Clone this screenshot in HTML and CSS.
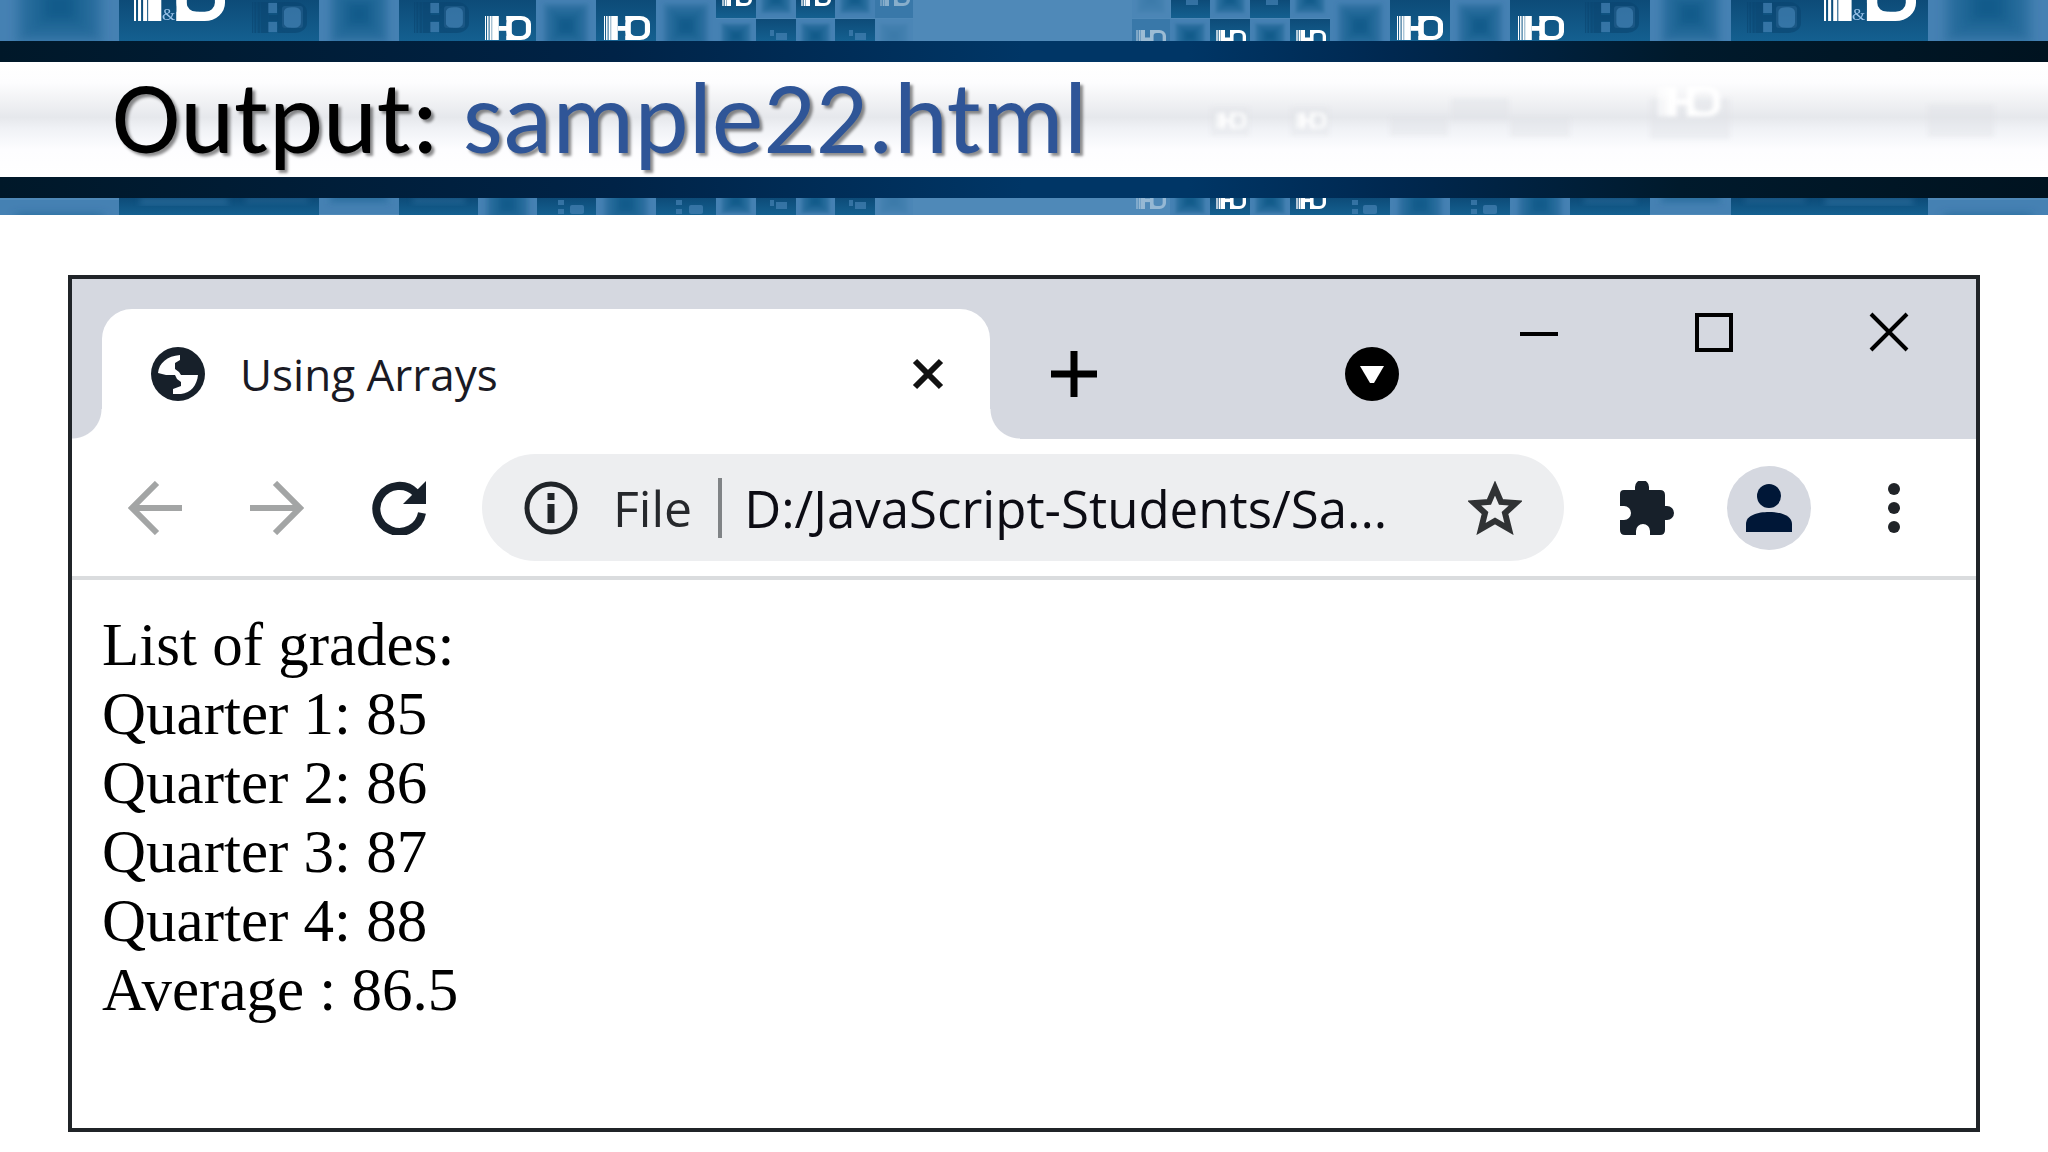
FILE: index.html
```html
<!DOCTYPE html>
<html lang="en">
<head>
    <meta charset="UTF-8">
    <meta name="viewport" content="width=device-width, initial-scale=1.0">
    <title>Output: sample22.html</title>
    <link rel="stylesheet" href="styles.css">
</head>
<body>
<!-- Shared shapes for the banner -->
<svg class="defs" aria-hidden="true">
    <defs>
        <filter id="soft"><feGaussianBlur stdDeviation="3"/></filter>
        <symbol id="tile" viewBox="0 0 80 80" preserveAspectRatio="none">
            <rect width="80" height="80" fill="#4581b3"/>
            <g fill="#00507d" fill-opacity="0.2" filter="url(#soft)">
                <rect x="10" y="10" width="60" height="60"/>
                <rect x="14" y="14" width="52" height="52"/>
                <rect x="18" y="18" width="44" height="44"/>
                <rect x="24" y="24" width="32" height="32"/>
                <rect x="29" y="29" width="22" height="22"/>
                <rect x="32" y="32" width="16" height="16"/>
            </g>
        </symbol>
        <symbol id="logo" viewBox="0 0 90 60" preserveAspectRatio="none">
            <g fill="currentColor">
                <rect width="2" height="60"/>
                <rect x="4" width="3" height="60"/>
                <rect x="9" width="4" height="60"/>
                <rect x="14" width="13" height="60"/>
                <rect x="27" y="25" width="16" height="12"/>
                <rect x="42" width="10" height="60"/>
                <rect x="42" width="22" height="10"/>
                <rect x="42" y="50" width="22" height="10"/>
            </g>
            <rect x="47" y="5" width="38" height="50" rx="15" fill="none" stroke="currentColor" stroke-width="10"/>
        </symbol>
        <linearGradient id="dark" x1="0" y1="0" x2="0" y2="1">
            <stop offset="0" stop-color="#0d4b78"/>
            <stop offset="1" stop-color="#146090"/>
        </linearGradient>
    </defs>
</svg>

<header class="banner">
    <svg class="strip strip-top" viewBox="0 0 2048 41" preserveAspectRatio="none" aria-hidden="true">
        <rect width="2048" height="41" fill="#4f89b8"/>
        <g fill="url(#dark)">
            <rect x="119" width="200" height="41"/>
            <rect x="399" width="137" height="41"/>
            <rect x="596" width="60" height="41"/>
            <rect x="716" width="40" height="18"/>
            <rect x="796" width="39" height="18"/>
            <rect x="756" y="19" width="40" height="22"/>
            <rect x="835" y="19" width="40" height="22"/>
            <rect x="1171" width="39" height="18"/>
            <rect x="1250" width="40" height="18"/>
            <rect x="1210" y="19" width="40" height="22"/>
            <rect x="1290" y="19" width="40" height="22"/>
            <rect x="1390" width="60" height="41"/>
            <rect x="1510" width="140" height="41"/>
            <rect x="1731" width="197" height="41"/>
        </g>
        <g fill="#23689a" opacity="0.5">
            <rect x="875" width="38" height="18"/>
            <rect x="1132" y="19" width="38" height="22"/>
        </g>
        <use href="#tile" x="0" y="-44" width="119" height="100"/>
        <use href="#tile" x="319" y="-26" width="80" height="80"/>
        <use href="#tile" x="536" y="-4" width="60" height="60"/>
        <use href="#tile" x="656" y="-4" width="60" height="60"/>
        <use href="#tile" x="756" y="-20" width="40" height="38"/>
        <use href="#tile" x="835" y="-20" width="40" height="38"/>
        <use href="#tile" x="716" y="19" width="40" height="34"/>
        <use href="#tile" x="796" y="19" width="39" height="34"/>
        <use href="#tile" x="875" y="19" width="38" height="34" opacity="0.3"/>
        <use href="#tile" x="1132" y="-20" width="38" height="38" opacity="0.3"/>
        <use href="#tile" x="1210" y="-20" width="40" height="38"/>
        <use href="#tile" x="1290" y="-20" width="40" height="38"/>
        <use href="#tile" x="1170" y="19" width="40" height="34"/>
        <use href="#tile" x="1250" y="19" width="40" height="34"/>
        <use href="#tile" x="1330" y="-4" width="60" height="60"/>
        <use href="#tile" x="1450" y="-4" width="60" height="60"/>
        <use href="#tile" x="1650" y="-26" width="81" height="80"/>
        <use href="#tile" x="1928" y="-44" width="120" height="100"/>
        <g class="logo-white">
            <use href="#logo" x="134" y="-34" width="91" height="55"/>
            <use href="#logo" x="485" y="16" width="46" height="24"/>
            <use href="#logo" x="604" y="16" width="46" height="24"/>
            <use href="#logo" x="722" y="-12" width="30" height="18"/>
            <use href="#logo" x="801" y="-12" width="30" height="18"/>
            <use href="#logo" x="880" y="-12" width="30" height="18" opacity="0.4"/>
            <use href="#logo" x="1136" y="30" width="30" height="18" opacity="0.5"/>
            <use href="#logo" x="1216" y="30" width="30" height="18"/>
            <use href="#logo" x="1296" y="30" width="30" height="18"/>
            <use href="#logo" x="1397" y="16" width="46" height="24"/>
            <use href="#logo" x="1518" y="16" width="46" height="24"/>
            <use href="#logo" x="1824" y="-34" width="92" height="55"/>
        </g>
        <g fill="#4581b3" opacity="0.7">
            <rect x="282" y="6" width="21" height="22" rx="3"/>
            <rect x="444" y="6" width="21" height="22" rx="3"/>
            <rect x="1614" y="6" width="21" height="22" rx="3"/>
            <rect x="1776" y="6" width="21" height="22" rx="3"/>
            <rect x="268" y="3" width="9" height="10"/>
            <rect x="268" y="22" width="9" height="10"/>
            <rect x="430" y="3" width="9" height="10"/>
            <rect x="430" y="22" width="9" height="10"/>
            <rect x="1601" y="3" width="9" height="10"/>
            <rect x="1601" y="22" width="9" height="10"/>
            <rect x="1763" y="3" width="9" height="10"/>
            <rect x="1763" y="22" width="9" height="10"/>
            <rect x="770" y="30" width="4" height="6"/>
            <rect x="776" y="33" width="11" height="7"/>
            <rect x="849" y="30" width="4" height="6"/>
            <rect x="855" y="33" width="11" height="7"/>
            <rect x="1186" y="0" width="12" height="5"/>
            <rect x="1266" y="0" width="12" height="5"/>
        </g>
        <g class="logo-dark">
            <use href="#logo" x="252" y="2" width="55" height="31"/>
            <use href="#logo" x="414" y="2" width="55" height="31"/>
            <use href="#logo" x="1585" y="2" width="54" height="31"/>
            <use href="#logo" x="1747" y="2" width="54" height="31"/>
        </g>
        <g class="amp">
            <text x="162" y="20">&amp;</text>
            <text x="1852" y="20">&amp;</text>
        </g>
    </svg>
    <div class="rule"></div>
    <div class="title-bar">
        <svg class="ghost" viewBox="0 0 2048 114" preserveAspectRatio="none" aria-hidden="true">
            <g fill="#dfe2e7" opacity="0.4">
                <rect x="1211" y="45" width="38" height="28"/>
                <rect x="1291" y="45" width="38" height="28"/>
                <rect x="1390" y="54" width="58" height="19"/>
                <rect x="1451" y="36" width="58" height="22"/>
                <rect x="1510" y="55" width="60" height="19"/>
                <rect x="1650" y="36" width="80" height="40"/>
                <rect x="1928" y="42" width="66" height="32"/>
            </g>
            <g class="logo-white">
                <use href="#logo" x="1216" y="50" width="30" height="16"/>
                <use href="#logo" x="1296" y="50" width="30" height="16"/>
                <use href="#logo" x="1658" y="24" width="62" height="30"/>
            </g>
        </svg>
        <h1>Output: <span>sample22.html</span></h1>
    </div>
    <div class="rule"></div>
    <svg class="strip strip-bottom" viewBox="0 0 2048 17" preserveAspectRatio="none" aria-hidden="true">
        <rect width="2048" height="17" fill="#4f89b8"/>
        <g fill="url(#dark)">
            <rect x="119" width="200" height="17"/>
            <rect x="399" width="79" height="17"/>
            <rect x="537" width="59" height="17"/>
            <rect x="656" width="60" height="17"/>
            <rect x="756" width="40" height="17"/>
            <rect x="835" width="40" height="17"/>
            <rect x="1210" width="40" height="17"/>
            <rect x="1290" width="100" height="17"/>
            <rect x="1450" width="60" height="17"/>
            <rect x="1570" width="80" height="17"/>
            <rect x="1731" width="197" height="17"/>
        </g>
        <g fill="#3a7bab" opacity="0.5" filter="url(#soft)">
            <rect x="140" width="88" height="7"/>
            <rect x="246" width="62" height="4"/>
            <rect x="413" width="52" height="5"/>
            <rect x="1584" width="52" height="5"/>
            <rect x="1745" width="60" height="4"/>
            <rect x="1825" width="88" height="7"/>
        </g>
        <use href="#tile" x="0" y="2" width="119" height="90"/>
        <use href="#tile" x="319" y="-64" width="80" height="80"/>
        <use href="#tile" x="478" y="-24" width="59" height="60"/>
        <use href="#tile" x="596" y="-24" width="60" height="60"/>
        <use href="#tile" x="716" y="-14" width="40" height="34"/>
        <use href="#tile" x="796" y="-14" width="39" height="34"/>
        <use href="#tile" x="875" y="-14" width="38" height="34" opacity="0.3"/>
        <use href="#tile" x="1170" y="-14" width="40" height="34"/>
        <use href="#tile" x="1250" y="-14" width="40" height="34"/>
        <use href="#tile" x="1390" y="-24" width="60" height="60"/>
        <use href="#tile" x="1510" y="-24" width="60" height="60"/>
        <use href="#tile" x="1650" y="-64" width="81" height="80"/>
        <use href="#tile" x="1928" y="2" width="120" height="90"/>
        <g class="logo-white">
            <use href="#logo" x="1136" y="-7" width="30" height="18" opacity="0.4"/>
            <use href="#logo" x="1216" y="-7" width="30" height="18"/>
            <use href="#logo" x="1296" y="-7" width="30" height="18"/>
        </g>
        <g fill="#4581b3" opacity="0.7">
            <rect x="558" y="2" width="6" height="5"/>
            <rect x="558" y="11" width="6" height="5"/>
            <rect x="570" y="7" width="14" height="9" rx="2"/>
            <rect x="676" y="2" width="6" height="5"/>
            <rect x="676" y="11" width="6" height="5"/>
            <rect x="689" y="7" width="14" height="9" rx="2"/>
            <rect x="770" y="2" width="4" height="6"/>
            <rect x="776" y="4" width="11" height="7"/>
            <rect x="849" y="2" width="4" height="6"/>
            <rect x="855" y="4" width="11" height="7"/>
            <rect x="1352" y="2" width="6" height="5"/>
            <rect x="1352" y="11" width="6" height="5"/>
            <rect x="1363" y="7" width="14" height="9" rx="2"/>
            <rect x="1471" y="2" width="6" height="5"/>
            <rect x="1471" y="11" width="6" height="5"/>
            <rect x="1483" y="7" width="14" height="9" rx="2"/>
        </g>
    </svg>
</header>

<!-- Browser window -->
<main class="window">
    <div class="tab-strip">
        <div class="tab">
            <svg class="icon" viewBox="0 0 54 54" aria-hidden="true">
                <circle cx="27" cy="27" r="27" fill="#17202a"/>
                <path fill="#fff" d="M7 26C8 16 16 9 29 8V13L24 16V22L28 25L30 28H47C46 38 40 46 30 47H22V42L30 39V35L26 32L24 28H15Z"/>
            </svg>
            <span class="tab-title">Using Arrays</span>
            <button class="tab-close" aria-label="Close tab">
                <svg width="32" height="32" viewBox="0 0 32 32"><path d="M3 3L29 29M29 3L3 29" stroke="#111" stroke-width="6"/></svg>
            </button>
        </div>
        <button class="new-tab" aria-label="New tab">
            <svg width="46" height="46" viewBox="0 0 46 46"><path d="M23 0V46M0 23H46" stroke="#000" stroke-width="7"/></svg>
        </button>
        <button class="tab-search" aria-label="Search tabs">
            <svg class="icon" viewBox="0 0 54 54"><circle cx="27" cy="27" r="27"/><path fill="#fff" d="M15 19H39L29 36H25Z"/></svg>
        </button>
        <div class="window-buttons">
            <button aria-label="Minimize">
                <svg width="40" height="40" viewBox="0 0 40 40"><path d="M1 22H39" stroke="#000" stroke-width="4"/></svg>
            </button>
            <button aria-label="Maximize">
                <svg width="40" height="40" viewBox="0 0 40 40"><rect x="3" y="3" width="34" height="35" fill="none" stroke="#000" stroke-width="4"/></svg>
            </button>
            <button aria-label="Close">
                <svg width="40" height="40" viewBox="0 0 40 40"><path d="M2 2L38 38M38 2L2 38" stroke="#000" stroke-width="4"/></svg>
            </button>
        </div>
    </div>

    <div class="toolbar">
        <div class="nav-buttons">
            <button aria-label="Back">
                <svg class="icon" viewBox="0 0 54 54"><path d="M54 27H5M29 2L4 27L29 52" fill="none" stroke="#a3a5a5" stroke-width="6"/></svg>
            </button>
            <button aria-label="Forward">
                <svg class="icon" viewBox="0 0 54 54"><path d="M0 27H49M25 2L50 27L25 52" fill="none" stroke="#a3a5a5" stroke-width="6"/></svg>
            </button>
            <button aria-label="Reload">
                <svg class="icon" viewBox="0 0 54 54"><path d="M44 12A23 23 0 1 0 50 32" fill="none" stroke="#17202a" stroke-width="8"/><path fill="#17202a" d="M54 0V23H31Z"/></svg>
            </button>
        </div>
        <div class="address">
            <svg class="icon" viewBox="0 0 54 54" aria-hidden="true">
                <circle cx="27" cy="27" r="24" fill="none" stroke="#202428" stroke-width="5"/>
                <path d="M27 12V19M27 23V42" stroke="#202428" stroke-width="7"/>
            </svg>
            <label for="url">File</label>
            <input id="url" type="text" value="D:/JavaScript-Students/Sa...">
            <button aria-label="Bookmark">
                <svg class="icon" viewBox="0 0 54 54"><path d="M27 7L33 21L48 22L37 32L41 48L27 40L13 48L17 32L6 22L21 21Z" fill="none" stroke="#303234" stroke-width="6"/></svg>
            </button>
        </div>
        <div class="actions">
            <button aria-label="Extensions">
                <svg class="icon" viewBox="0 0 54 54"><path fill="#17202a" d="M0 13Q0 9 4 9H15V6A7 7 0 0 1 29 6V9H40Q45 9 45 14V25H47A7 7 0 0 1 47 39H45V49Q45 54 40 54H30V50A7 7 0 0 0 16 50V54H5Q0 54 0 49V39H4A7 7 0 0 0 4 25H0Z"/></svg>
            </button>
            <button class="profile" aria-label="Profile">
                <svg width="46" height="48" viewBox="0 0 46 48"><circle cx="23" cy="12" r="12" fill="#001737"/><path fill="#001737" d="M0 48V40C0 31 12 28 23 28S46 31 46 40V48Z"/></svg>
            </button>
            <button class="menu" aria-label="Menu">
                <svg width="12" height="50" viewBox="0 0 12 50" fill="#202428"><circle cx="6" cy="6" r="6"/><circle cx="6" cy="25" r="6"/><circle cx="6" cy="44" r="6"/></svg>
            </button>
        </div>
    </div>

    <div class="page">
        <p>List of grades:</p>
        <p>Quarter 1: 85</p>
        <p>Quarter 2: 86</p>
        <p>Quarter 3: 87</p>
        <p>Quarter 4: 88</p>
        <p>Average : 86.5</p>
    </div>
</main>
</body>
</html>
```
FILE: styles.css
```css
* {
    margin: 0;
    padding: 0;
    box-sizing: border-box;
}
body {
    display: flex;
    flex-direction: column;
    min-height: 100vh;
    background-color: #fff;
    font-family: "Open Sans", sans-serif;
}
svg {
    display: block;
}
button {
    display: flex;
    align-items: center;
    justify-content: center;
    border: none;
    background: none;
    cursor: pointer;
}
.defs {
    position: absolute;
    width: 0;
    height: 0;
}
.icon {
    width: 54px;
    height: 54px;
    flex-shrink: 0;
}

/* Banner */
.strip {
    width: 100%;
}
.strip-top {
    height: 41px;
}
.strip-bottom {
    height: 17px;
}
.logo-white {
    color: #fff;
}
.logo-dark {
    color: #0b4570;
    opacity: 0.6;
}
.amp {
    font-family: "Liberation Serif", serif;
    font-size: 17px;
    fill: #9cc4ea;
}
.rule {
    height: 21px;
    background: linear-gradient(90deg, #001829 0%, #002347 30%, #003666 50%, #003666 58%, #002850 68%, #001a2c 82%, #001320 100%);
}
.title-bar {
    position: relative;
    height: 115px;
    padding-left: 112px;
    background: linear-gradient(180deg, #fff 0%, #fdfdfe 18%, #e6e8ec 48%, #f0f2f6 58%, #fdfdff 76%, #fff 100%);
}
/* Washed-out tiles showing through the white band */
.ghost {
    position: absolute;
    inset: 0;
    width: 100%;
    height: 100%;
    filter: blur(2px);
}
h1 {
    position: relative;
    font-family: Calibri, Carlito, Lato, sans-serif;
    font-size: 103px;
    font-weight: 400;
    line-height: 112px;
    white-space: nowrap;
    color: #000;
    text-shadow: 3px 3px 3px rgba(0, 0, 0, 0.45);
}
h1 span {
    color: #2f5597;
}

/* Browser window */
.window {
    flex: 1;
    display: flex;
    flex-direction: column;
    margin: 60px 68px 20px;
    border: 4px solid #202428;
}
.tab-strip {
    display: flex;
    align-items: flex-end;
    padding: 30px 42px 0 30px;
    background-color: #d5d8e0;
}
.tab {
    position: relative;
    flex: 0 1 888px;
    display: flex;
    align-items: center;
    gap: 35px;
    height: 130px;
    padding: 0 46px 0 49px;
    border-radius: 30px 30px 0 0;
    background-color: #fff;
}
.tab::before,
.tab::after {
    content: '';
    position: absolute;
    bottom: 0;
    width: 30px;
    height: 30px;
}
.tab::before {
    right: 100%;
    background: radial-gradient(circle at 0 0, transparent 29px, #fff 30px);
}
.tab::after {
    left: 100%;
    background: radial-gradient(circle at 100% 0, transparent 29px, #fff 30px);
}
.tab-title {
    flex: 1;
    font-size: 44px;
    color: #1a1a24;
}
.new-tab,
.tab-search {
    height: 130px;
}
.new-tab {
    margin-left: 61px;
}
.tab-search {
    margin-left: auto;
    margin-right: 120px;
}
.window-buttons {
    align-self: flex-start;
    display: flex;
    gap: 135px;
    padding-top: 3px;
    margin-right: 25px;
}

/* Toolbar */
.toolbar {
    display: flex;
    align-items: center;
    gap: 56px;
    padding: 15px 76px;
    border-bottom: 4px solid #dadcde;
}
.nav-buttons {
    display: flex;
    gap: 68px;
}
.address {
    flex: 1;
    min-width: 0;
    display: flex;
    align-items: center;
    height: 107px;
    padding: 0 42px;
    border-radius: 54px;
    background-color: #edeef0;
}
.address label {
    margin-left: 35px;
    padding-right: 26px;
    border-right: 4px solid #808386;
    font-size: 50px;
    line-height: 60px;
    color: #26282c;
}
.address input {
    flex: 1;
    min-width: 0;
    height: 70px;
    margin-left: 22px;
    border: none;
    outline: none;
    background: none;
    font-family: "Open Sans", sans-serif;
    font-size: 51px;
    color: #0c0c14;
}
.nav-buttons {
    margin-left: -20px;
}
.actions {
    display: flex;
    align-items: center;
}
.profile {
    width: 84px;
    height: 84px;
    margin: 0 77px 0 53px;
    border-radius: 50%;
    background-color: #d5d8e0;
}

/* Page content */
.page {
    padding: 30px;
    font-family: "Liberation Serif", serif;
    font-size: 61px;
    line-height: 69px;
    color: #000;
}
```
